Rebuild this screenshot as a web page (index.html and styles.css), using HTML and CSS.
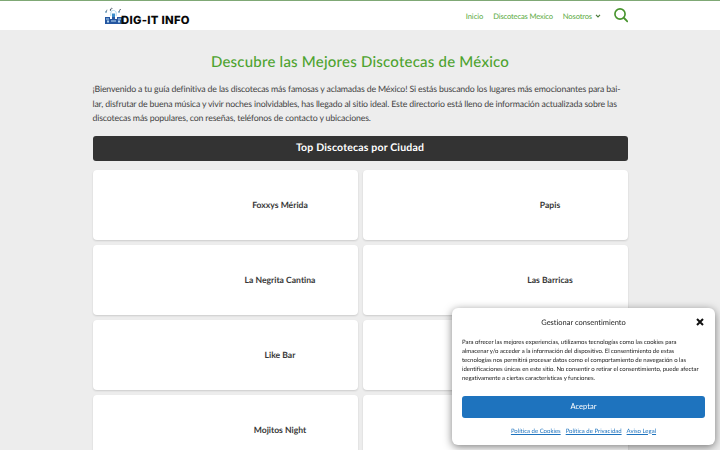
FILE: index.html
```html
<!DOCTYPE html>
<html lang="es">
<head>
<meta charset="utf-8">
<title>Discotecas de México</title>
<link rel="stylesheet" href="styles.css">
</head>
<body>
<header class="site-header">
  <div class="header-inner">
    <a class="brand">
      <svg class="brand-icon" viewBox="0 0 17 18" aria-hidden="true">
        <path d="M0 10h5v2h2v-2h3v2h2v-2h5v7H0z" fill="#2456a0"/>
        <path d="M1 11.5h3v1H1zM13 11.5h3v1h-3zM2 13.5h2v2H2zM13 13.5h2v2h-2zM6 13.5h5v1H6z" fill="#b7d9f4"/>
        <path d="M7 6.5h3V10H7z" fill="#398cca"/>
        <path d="M5.8 9V6c0-3.4 5.4-3.4 5.4 0v3" fill="none" stroke="#8cc8e8" stroke-width=".7"/>
        <path d="M1 5.2l1-2.5M5.5 3l1-2 1 .5M14 5l1-2.7 1 .5" fill="none" stroke="#26384a" stroke-width=".6"/>
        <circle cx="1" cy="5" r=".8" fill="#347fae"/><circle cx="5.5" cy="3" r=".7" fill="#26384a"/><circle cx="14" cy="5" r=".8" fill="#347fae"/>
      </svg>
      <span class="brand-name">DIG-IT INFO</span>
    </a>
    <nav class="nav">
      <a class="n1">Inicio</a><a class="n2">Discotecas Mexico</a><a class="n3">Nosotros</a>
      <svg class="caret" viewBox="0 0 6 4" aria-hidden="true"><path d="M1 .8l2 2 2-2" fill="none" stroke="#4a7a3a" stroke-width="1.2"/></svg>
      <svg class="search" viewBox="0 0 14 14" aria-hidden="true"><circle cx="5.8" cy="5.8" r="4.9" fill="none" stroke="#48942e" stroke-width="1.6"/><path d="M9.4 9.4l4 4" stroke="#48942e" stroke-width="1.8"/></svg>
    </nav>
  </div>
</header>
<main class="content">
  <h1 class="title"><span>Descubre las Mejores Discotecas de México</span></h1>
  <p class="intro">¡Bienvenido a tu guía definitiva de las discotecas más famosas y aclamadas de México! Si estás buscando los lugares más emocionantes para bai-<br>lar, disfrutar de buena música y vivir noches inolvidables, has llegado al sitio ideal. Este directorio está lleno de información actualizada sobre las<br>discotecas más populares, con reseñas, teléfonos de contacto y ubicaciones.</p>
  <h2 class="banner"><span>Top Discotecas por Ciudad</span></h2>
  <section class="grid">
    <article class="card"><h3>Foxxys Mérida</h3></article>
    <article class="card"><h3>Papis</h3></article>
    <article class="card"><h3>La Negrita Cantina</h3></article>
    <article class="card"><h3>Las Barricas</h3></article>
    <article class="card"><h3>Like Bar</h3></article>
    <article class="card"></article>
    <article class="card"><h3>Mojitos Night</h3></article>
    <article class="card"></article>
  </section>
</main>
<aside class="consent">
  <div class="consent-head">
    <span class="consent-title">Gestionar consentimiento</span>
    <svg class="close" viewBox="0 0 8 8" aria-hidden="true"><path d="M1 1l6 6M7 1L1 7" stroke="#111" stroke-width="2"/></svg>
  </div>
  <p class="consent-text">Para ofrecer las mejores experiencias, utilizamos tecnologías como las cookies para<br>almacenar y/o acceder a la información del dispositivo. El consentimiento de estas<br>tecnologías nos permitirá procesar datos como el comportamiento de navegación o las<br>identificaciones únicas en este sitio. No consentir o retirar el consentimiento, puede afectar<br>negativamente a ciertas características y funciones.</p>
  <button class="accept">Aceptar</button>
  <div class="links"><a>Política de Cookies</a><a>Política de Privacidad</a><a>Aviso Legal</a></div>
</aside>
</body>
</html>
```
FILE: styles.css
```css
* { box-sizing: border-box; }
html, body { height: 100%; overflow: hidden; }
body { margin: 0; background: #ededed; color: #444; font-family: Lato, sans-serif; text-rendering: geometricPrecision; font-variant-ligatures: none; }
h1, h2, h3, p { margin: 0; }
.site-header { height: 30px; background: #fff; border-top: 1px solid #7fa875; }
.header-inner { width: 523.5px; height: 29px; margin-left: 104.5px; display: flex; align-items: center; justify-content: space-between; }
.brand { display: flex; align-items: center; }
.brand-icon { width: 17px; height: 18px; }
.brand-name { font: 800 11.3px/16px Inter, sans-serif; color: #080808; white-space: nowrap; padding-top: 8px; letter-spacing: .28px; margin-left: -.5px; }
.nav { display: flex; align-items: center; font-size: 7.6px; letter-spacing: -.16px; color: #5cab3f; white-space: nowrap; }
.n1 { letter-spacing: -.05px; }
.n2, .n3 { margin-left: 10px; }
.caret { width: 6px; height: 4px; margin-left: 2.5px; }
.search { width: 14.5px; height: 14.5px; margin-left: 13px; }
.content { width: 535px; margin-left: 92.5px; }
.title { height: 52px; padding-top: 20px; text-align: center; font-size: 15px; line-height: 24px; font-weight: 500; letter-spacing: .22px; color: #4da32f; white-space: nowrap; }
.intro { height: 54px; font-size: 8.75px; line-height: 14.5px; letter-spacing: -.155px; white-space: nowrap; }
.banner { height: 24.5px; border-radius: 3px; background: #333; color: #fff; text-align: center; font-size: 10.5px; line-height: 24px; font-weight: 700; letter-spacing: .18px; }
.grid { margin-top: 9.5px; display: grid; grid-template-columns: 1fr 1fr; grid-auto-rows: 70px; gap: 5px; }
.card { background: #fff; border-radius: 4px; box-shadow: 0 1px 2px rgba(0,0,0,.14); display: flex; align-items: center; padding-left: 110px; }
.card h3 { width: 100%; text-align: center; font-size: 8.6px; font-weight: 700; color: #383838; }
.consent { position: fixed; left: 452px; top: 308px; width: 263px; height: 137px; padding: 7px 10px; background: #fff; border-radius: 6px; box-shadow: 0 2px 8px rgba(0,0,0,.5); color: #222; }
.consent-head { height: 14px; display: grid; grid-template-columns: 10px 1fr 10px; align-items: center; }
.consent-title { grid-column: 2; text-align: center; font-size: 7.5px; }
.close { width: 8px; height: 8px; justify-self: end; margin-right: 1px; }
.consent-text { margin-top: 9px; height: 49.5px; font-size: 6px; line-height: 9px; letter-spacing: -.025px; white-space: nowrap; }
.accept { display: block; margin-top: 8px; width: 243px; height: 22.5px; border: 0; border-radius: 3px; padding: 0; background: #1e73be; color: #fff; font: 7.5px Lato, sans-serif; }
.links { margin-top: 8.5px; display: flex; justify-content: center; gap: 5px; font-size: 6px; line-height: 10px; color: #1e73be; white-space: nowrap; }
.links a { text-decoration: underline; }
```
